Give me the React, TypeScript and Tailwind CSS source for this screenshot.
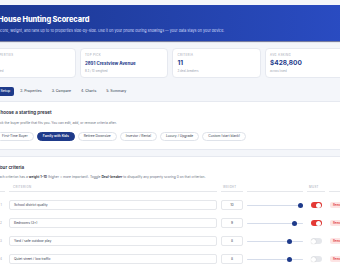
import type { ReactNode } from 'react';

const stats = [
  { label: 'Properties', value: '4', sub: '3 added', big: true },
  { label: 'Top pick', value: '2891 Crestview Avenue', sub: '8.3 / 10 weighted', big: false },
  { label: 'Criteria', value: '11', sub: '3 deal-breakers', big: true },
  { label: 'Avg asking', value: '$428,800', sub: 'across listed', big: true },
];

const tabs = ['1. Setup', '2. Properties', '3. Compare', '4. Charts', '5. Summary'];

const presets = [
  'First-Time Buyer',
  'Family with Kids',
  'Retiree Downsize',
  'Investor / Rental',
  'Luxury / Upgrade',
  'Custom (start blank)',
];

const criteria = [
  { name: 'School district quality', weight: 10, must: true },
  { name: 'Bedrooms (3+)', weight: 9, must: true },
  { name: 'Yard / safe outdoor play', weight: 8, must: false },
  { name: 'Quiet street / low traffic', weight: 8, must: false },
];

function Card({ children, className = '' }: { children: ReactNode; className?: string }) {
  return (
    <div className={`rounded-[4px] border border-[#e6e9f0] bg-white ${className}`}>{children}</div>
  );
}

function Slider({ value }: { value: number }) {
  // thumb stays inside the track, like a native range input
  const pct = (value - 1) / 9;
  return (
    <div className="relative h-[10px] w-full">
      <div className="absolute left-0 right-0 top-[4.5px] h-[1px] rounded-full bg-[#d5dcea]" />
      <div
        className="absolute top-[2.5px] h-[5px] w-[5px] rounded-full bg-[#1e3a8a]"
        style={{ left: `calc(${pct} * (100% - 5px))` }}
      />
    </div>
  );
}

function Toggle({ on }: { on: boolean }) {
  return (
    <div
      className={`flex h-[6px] w-[11px] items-center rounded-full px-[0.5px] ${
        on ? 'justify-end bg-[#e53935]' : 'justify-start bg-[#e5e7eb]'
      }`}
    >
      <span className="h-[5px] w-[5px] rounded-full bg-white shadow-[0_0_1px_rgba(0,0,0,0.25)]" />
    </div>
  );
}

export default function App() {
  return (
    <div className="h-[270px] w-[340px] overflow-hidden bg-[#f4f6fa] font-['Inter',sans-serif] text-[4px] leading-[5px] text-[#1f2937]">
      <div className="ml-[-13px] w-[366px] pt-[5px]">
        <header className="h-[36px] rounded-[4px] bg-gradient-to-r from-[#1c3892] to-[#2a4cc3] px-[11px] pt-[11px] shadow-[0_1px_1px_rgba(15,23,80,0.6)]">
          <h1 className="text-[7.4px] font-extrabold leading-[8px] tracking-[-0.1px] text-white">
            House Hunting Scorecard
          </h1>
          <p className="mt-[4px] whitespace-nowrap text-[3.7px] leading-[5px] text-[#d4dcfb]">
            Score, weight, and rank up to 10 properties side-by-side. Use it on your phone during showings — your data stays on your device.
          </p>
        </header>

        <div className="mt-[7px] grid grid-cols-4 gap-[4px]">
          {stats.map((s) => (
            <Card key={s.label} className="h-[30px] px-[4.5px] pt-[4px]">
              <div className="text-[2.8px] uppercase leading-[4px] tracking-[0.4px] text-[#9ca3af]">
                {s.label}
              </div>
              <div
                className={`mt-[2.5px] whitespace-nowrap font-bold leading-[7px] text-[#1e3a8a] ${
                  s.big ? 'text-[6.5px]' : 'text-[4.4px]'
                }`}
              >
                {s.value}
              </div>
              <div className="mt-[2px] text-[2.8px] leading-[4px] text-[#9ca3af]">{s.sub}</div>
            </Card>
          ))}
        </div>

        <nav className="ml-[6px] mt-[9px] flex gap-[2px]">
          {tabs.map((t, i) => (
            <span
              key={t}
              className={`flex h-[9px] items-center rounded-[2px] px-[4px] text-[3.5px] font-medium ${
                i === 0 ? 'bg-[#1e3a8a] text-white' : 'text-[#4b5563]'
              }`}
            >
              {t}
            </span>
          ))}
        </nav>

        <Card className="mt-[5px] px-[9px] pb-[8px] pt-[8px]">
          <h2 className="text-[4.6px] font-semibold leading-[6px]">Choose a starting preset</h2>
          <p className="mt-[4.5px] text-[3.3px] leading-[5px] text-[#6b7280]">
            Pick the buyer profile that fits you. You can edit, add, or remove criteria after.
          </p>
          <div className="ml-[-1px] mt-[6px] flex gap-[3px]">
            {presets.map((p, i) => (
              <span
                key={p}
                className={`flex h-[9px] items-center whitespace-nowrap rounded-full border px-[5px] text-[3.3px] ${
                  i === 1
                    ? 'border-[#1e3a8a] bg-[#1e3a8a] font-semibold text-white'
                    : 'border-[#dfe3ea] bg-white text-[#374151]'
                }`}
              >
                {p}
              </span>
            ))}
          </div>
        </Card>

        <Card className="mt-[6px] px-[9px] pb-[8px] pt-[8px]">
          <h2 className="text-[4.6px] font-semibold leading-[6px]">Your criteria</h2>
          <p className="mt-[4.5px] whitespace-nowrap text-[3.3px] leading-[5px] text-[#6b7280]">
            Each criterion has a <b className="font-semibold text-[#1f2937]">weight 1–10</b> (higher = more important). Toggle{' '}
            <b className="font-semibold text-[#1f2937]">Deal-breaker</b> to disqualify any property scoring 0 on that criterion.
          </p>

          <div className="mt-[5px] grid grid-cols-[8px_208px_22px_56px_18px_40px] items-center gap-x-[4px] gap-y-[8px] text-[3px] leading-[4px]">
            {['#', 'Criterion', 'Weight', '', 'Must', ''].map((h, i) => (
              <div
                key={i}
                className={`h-[7px] border-b border-[#e5e7eb] text-[2.8px] uppercase leading-[4px] tracking-[0.4px] text-[#9ca3af] ${
                  i === 1 ? 'pl-[4px]' : i === 2 ? 'pl-[2px]' : i === 4 ? 'pl-[2px]' : ''
                }`}
              >
                {h}
              </div>
            ))}

            {criteria.map((c, i) => (
              <div key={c.name} className="contents">
                <div className="text-center text-[3px] leading-[4px] text-[#9ca3af]">{i + 1}</div>
                <div className="flex h-[10px] items-center rounded-[2px] border border-[#e5e7eb] bg-white px-[4px] text-[3.3px] text-[#374151]">
                  {c.name}
                </div>
                <div className="flex h-[10px] items-center justify-center rounded-[2px] border border-[#e5e7eb] bg-white text-[3.3px] text-[#374151]">
                  {c.weight}
                </div>
                <Slider value={c.weight} />
                <div className="flex justify-center">
                  <Toggle on={c.must} />
                </div>
                <div className="flex pl-[1px]">
                  <span className="flex h-[6px] items-center rounded-[2px] bg-[#fde4e4] px-[3px] text-[2.8px] font-medium text-[#dc2626]">
                    Remove
                  </span>
                </div>
              </div>
            ))}
          </div>
        </Card>
      </div>
    </div>
  );
}
